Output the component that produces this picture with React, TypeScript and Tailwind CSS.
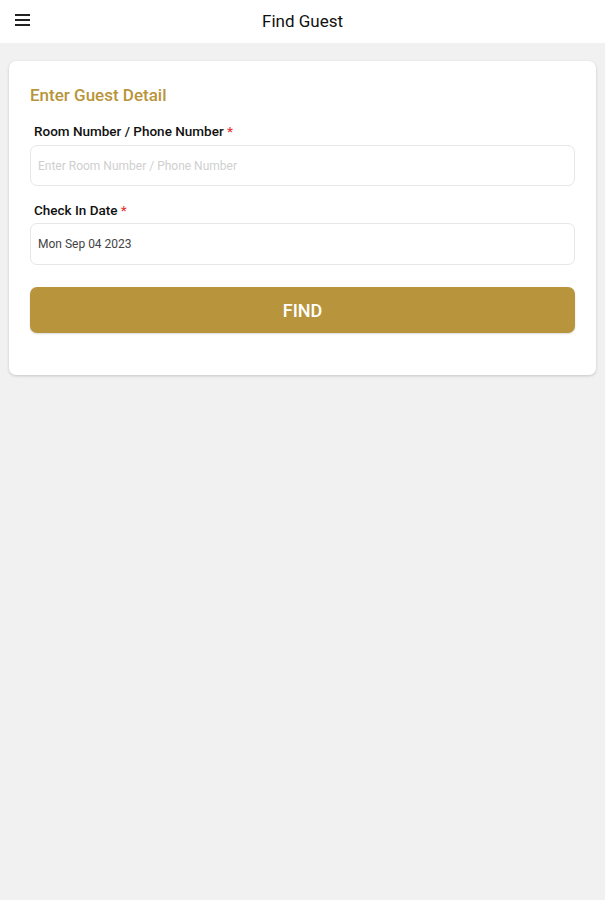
import React from "react";

export default function App() {
  return (
    <div className="min-h-[900px] w-full bg-[#f1f1f1]" style={{ fontFamily: "Roboto, 'Liberation Sans', sans-serif" }}>
      <div className="relative flex h-[43px] items-center justify-center bg-white">
        <div className="absolute left-[15px] top-[14px] flex w-[15px] flex-col gap-[3px]">
          <div className="h-[2px] bg-[#222]" />
          <div className="h-[2px] bg-[#222]" />
          <div className="h-[2px] bg-[#222]" />
        </div>
        <span className="text-[17px] text-[#111]">Find Guest</span>
      </div>
      <div className="px-[9px] pt-[18px]">
        <div className="rounded-[7px] bg-white px-[21px] pb-[42px] pt-[24px] shadow-[0_1px_3px_rgba(0,0,0,0.18)]">
          <div className="text-[17px] font-medium leading-[20px] text-[#b8953a]">Enter Guest Detail</div>
          <div className="mt-[18px] pl-[4px] text-[13.5px] font-medium leading-[17px] text-[#111]">
            Room Number / Phone Number <span className="text-[#e53935]">*</span>
          </div>
          <div className="mt-[5px] flex h-[41px] items-center rounded-[7px] border border-[#e6e6e6] px-[7px] text-[12px] text-[#cfcfcf]">
            Enter Room Number / Phone Number
          </div>
          <div className="mt-[16px] pl-[4px] text-[13.5px] font-medium leading-[17px] text-[#111]">
            Check In Date <span className="text-[#e53935]">*</span>
          </div>
          <div className="mt-[4px] flex h-[42px] items-center rounded-[7px] border border-[#e6e6e6] px-[7px] text-[12px] text-[#444]">
            Mon Sep 04 2023
          </div>
          <div className="mt-[22px] flex h-[46px] items-center justify-center rounded-[7px] bg-[#b8953d] text-[18px] font-medium text-white shadow-[0_1px_2px_rgba(0,0,0,0.15)]">
            FIND
          </div>
        </div>
      </div>
    </div>
  );
}
